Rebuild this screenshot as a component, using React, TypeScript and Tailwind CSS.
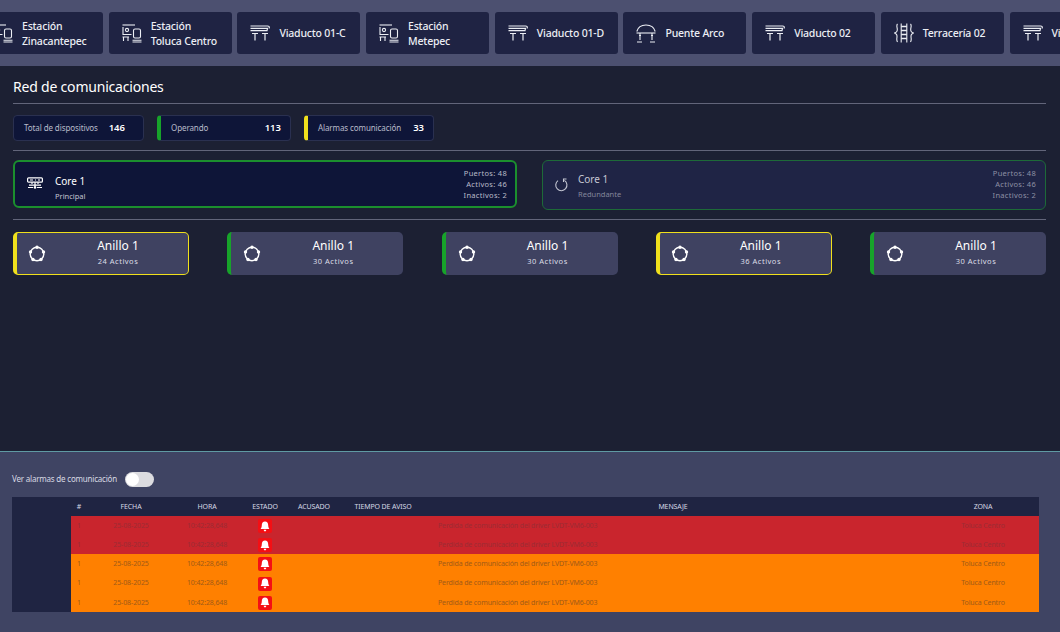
const stationCards = [
  { kind: 'station', lines: ['Estación', 'Zinacantepec'] },
  { kind: 'station', lines: ['Estación', 'Toluca Centro'] },
  { kind: 'viaduct', lines: ['Viaducto 01-C'] },
  { kind: 'station', lines: ['Estación', 'Metepec'] },
  { kind: 'viaduct', lines: ['Viaducto 01-D'] },
  { kind: 'arch', lines: ['Puente Arco'] },
  { kind: 'viaduct', lines: ['Viaducto 02'] },
  { kind: 'track', lines: ['Terracería 02'] },
  { kind: 'viaduct', lines: ['Viaducto 03'] },
]

const rings = [
  { active: 24, alert: true },
  { active: 30, alert: false },
  { active: 30, alert: false },
  { active: 36, alert: true },
  { active: 30, alert: false },
]

const rows = ['red', 'red', 'orange', 'orange', 'orange']

function StationIcon() {
  return (
    <svg width="20" height="19" viewBox="0 0 20 19" fill="none" stroke="currentColor" strokeWidth="1.1">
      <path d="M0.5 1H13" />
      <path d="M1 3V10.5H9.5" />
      <circle cx="5" cy="6" r="1.6" />
      <rect x="11.5" y="5" width="7" height="9" rx="1.5" />
      <path d="M0.5 13H7M1.5 13V17M6 13V17" />
      <path d="M10.5 16.2H19.5M10.5 18H19.5" />
    </svg>
  )
}

function ViaductIcon() {
  return (
    <svg width="20" height="16" viewBox="0 0 20 16" fill="none" stroke="currentColor" strokeWidth="1.2">
      <path d="M0.5 1H17.5C19 1 19.5 1.5 19.2 3.5" />
      <path d="M0.5 3.4H17.5L17 5.6H0.5" />
      <path d="M2 8.5H8M5 8.5V15.5M12 8.5H18M15 8.5V15.5" />
    </svg>
  )
}

function ArchIcon() {
  return (
    <svg width="20" height="19" viewBox="0 0 20 19" fill="none" stroke="currentColor" strokeWidth="1.1">
      <path d="M0.8 7.5C2 3 5.5 1 10 1C14.5 1 18 3 19.2 7.5" />
      <path d="M0.5 9H19.5" />
      <path d="M4 9V16M16 9V16M3 11.5H5M15 11.5H17" />
      <path d="M1 18H6M14 18H19" />
    </svg>
  )
}

function TrackIcon() {
  return (
    <svg width="20" height="20" viewBox="0 0 20 20" fill="none" stroke="currentColor" strokeWidth="1.1">
      <path d="M3.5 1C1.5 3 4.5 6 2.8 8.5C2.2 9.4 1.2 9.8 0.6 10C1.2 10.4 2.4 10.8 2.8 12C3.6 14.5 1.8 16.5 3.5 19" />
      <path d="M16.5 1C18.5 3 15.5 6 17.2 8.5C17.8 9.4 18.8 9.8 19.4 10C18.8 10.4 17.6 10.8 17.2 12C16.4 14.5 18.2 16.5 16.5 19" />
      <path d="M7.2 0.5V19.5M12.8 0.5V19.5" />
      <path d="M7.2 3.5H12.8M7.2 7.5H12.8M7.2 11.5H12.8M7.2 15.5H12.8" strokeWidth="1.6" />
    </svg>
  )
}

function CardIcon({ kind }: { kind: string }) {
  if (kind === 'station') return <StationIcon />
  if (kind === 'viaduct') return <ViaductIcon />
  if (kind === 'arch') return <ArchIcon />
  return <TrackIcon />
}

function RingIcon() {
  return (
    <svg width="18" height="18" viewBox="0 0 18 18" fill="none" stroke="white" strokeWidth="1.4">
      <circle cx="9" cy="9" r="6.8" />
      <circle cx="9" cy="2.2" r="1.7" fill="white" stroke="none" />
      <circle cx="15.5" cy="6.9" r="1.7" fill="white" stroke="none" />
      <circle cx="13" cy="14.5" r="1.7" fill="white" stroke="none" />
      <circle cx="5" cy="14.5" r="1.7" fill="white" stroke="none" />
      <circle cx="2.5" cy="6.9" r="1.7" fill="white" stroke="none" />
    </svg>
  )
}

function SwitchIcon() {
  return (
    <svg width="16" height="14" viewBox="0 0 16 14" fill="none" stroke="white" strokeWidth="1.2">
      <rect x="0.6" y="0.8" width="14.8" height="4.4" rx="1" />
      <path d="M3 3H6M8 3H9M11 3H13" />
      <path d="M5 5.2V7M11 5.2V7" />
      <path d="M8 5.2V11" />
      <circle cx="8" cy="10.5" r="1.3" fill="white" stroke="none" />
      <path d="M2 8.2H14M1 10.5H6M10 10.5H15" />
    </svg>
  )
}

function RefreshIcon() {
  return (
    <svg width="14" height="14" viewBox="0 0 14 14" fill="none" stroke="#c5c7d3" strokeWidth="1.1">
      <path d="M4 2.6A5.6 5.6 0 1 0 10.4 2.4" />
      <path d="M12.5 1H9.5V4" />
    </svg>
  )
}

function Bell() {
  return (
    <div className="flex h-[14px] w-[14px] items-center justify-center rounded-[2px] bg-[#f40f14]">
      <svg width="10" height="11" viewBox="0 0 10 11" fill="white">
        <path d="M5 0.6C2.9 0.6 1.8 2.2 1.8 4.2C1.8 6.2 1.2 7.2 0.5 8H9.5C8.8 7.2 8.2 6.2 8.2 4.2C8.2 2.2 7.1 0.6 5 0.6Z" />
        <path d="M3.7 8.8C3.9 9.8 4.4 10.4 5 10.4C5.6 10.4 6.1 9.8 6.3 8.8Z" />
      </svg>
    </div>
  )
}

export default function App() {
  return (
    <div className="flex h-[632px] w-[1060px] flex-col overflow-hidden bg-[#1c2033] font-['Noto_Sans',sans-serif] text-white">
      {/* TOP BAR */}
      <div className="h-[66px] shrink-0 overflow-hidden bg-[#4c5070] pt-3">
        <div className="-ml-5 flex w-[1200px] gap-[5.7px]">
          {stationCards.map((c, i) => (
            <div
              key={i}
              className="flex h-[42px] w-[123px] shrink-0 items-center gap-[9px] rounded-[3px] bg-[#1f2343] pl-[13px] text-[#eceef4]"
            >
              <div className="flex w-[20px] shrink-0 justify-center">
                <CardIcon kind={c.kind} />
              </div>
              <div className="pt-[1px] text-[10.5px] leading-[15px] font-medium tracking-[-0.2px] whitespace-nowrap">
                {c.lines.map(l => (
                  <div key={l}>{l}</div>
                ))}
              </div>
            </div>
          ))}
        </div>
      </div>

      {/* RED DE COMUNICACIONES */}
      <div className="h-[385px] shrink-0 px-[13px] pt-[10px] pr-[14px]">
        <h1 className="h-[28px] border-b border-[#62657a] text-[14px] leading-[21px] font-normal tracking-[-0.2px]">
          Red de comunicaciones
        </h1>

        <div className="mt-[11px] flex gap-[13px] border-b border-[#62657a] pb-[9px]">
          <div className="flex h-[26px] w-[131px] items-center justify-between rounded-[4px] border border-[#2a3050] bg-[#0e1538] pr-[18px] pl-[10px]">
            <span className="text-[8px] tracking-[-0.1px] text-[#b9bcca]">Total de dispositivos</span>
            <span className="text-[9.5px] font-semibold">146</span>
          </div>
          <div className="flex h-[26px] w-[134px] items-center justify-between rounded-[4px] border border-l-[4px] border-[#2a3050] border-l-[#17a32a] bg-[#0e1538] pr-[9px] pl-[10px]">
            <span className="text-[8px] tracking-[-0.1px] text-[#b9bcca]">Operando</span>
            <span className="text-[9.5px] font-semibold">113</span>
          </div>
          <div className="flex h-[26px] w-[130px] items-center justify-between rounded-[4px] border border-l-[4px] border-[#2a3050] border-l-[#f0e01c] bg-[#0e1538] pr-[9px] pl-[10px]">
            <span className="text-[8px] tracking-[-0.1px] text-[#b9bcca]">Alarmas comunicación</span>
            <span className="text-[9.5px] font-semibold">33</span>
          </div>
        </div>

        <div className="flex justify-between border-b border-[#62657a] pt-[9px] pb-[9px]">
          <div className="flex h-[48px] w-[504px] items-center rounded-[6px] border-2 border-[#1b8f2e] bg-[#0e1538] pr-[8px] pl-[11px]">
            <div className="flex w-[18px] justify-center">
              <SwitchIcon />
            </div>
            <div className="mt-[8px] ml-[11px]">
              <div className="text-[10px] leading-[14px] font-normal">Core 1</div>
              <div className="mt-[3px] text-[7.5px] leading-[11px] text-[#c3c5d1]">Principal</div>
            </div>
            <div className="ml-auto text-right text-[7.5px] leading-[11px] tracking-[0.3px] text-[#b9bbc9]">
              <div>Puertos: 48</div>
              <div>Activos: 46</div>
              <div>Inactivos: 2</div>
            </div>
          </div>
          <div className="flex h-[50px] w-[504px] items-center rounded-[6px] border border-[#1d6a38] bg-[#1f2445] pr-[9px] pl-[11px]">
            <div className="flex w-[14px] justify-center">
              <RefreshIcon />
            </div>
            <div className="ml-[10px] pt-[2px]">
              <div className="text-[10px] leading-[14px] text-[#c5c7d3]">Core 1</div>
              <div className="mt-[3px] text-[7.5px] leading-[11px] text-[#83869b]">Redundante</div>
            </div>
            <div className="ml-auto pb-[2px] text-right text-[7.5px] leading-[11px] tracking-[0.3px] text-[#8d90a4]">
              <div>Puertos: 48</div>
              <div>Activos: 46</div>
              <div>Inactivos: 2</div>
            </div>
          </div>
        </div>

        <div className="mt-[12px] flex justify-between">
          {rings.map((r, i) => (
            <div
              key={i}
              className={
                r.alert
                  ? 'flex h-[43px] w-[176px] items-center rounded-[5px] border border-l-[4px] border-[#f0e01c] bg-[#3f4261] pl-[11px]'
                  : 'flex h-[43px] w-[176px] items-center rounded-[5px] border-l-[4px] border-[#17a32a] bg-[#3f4261] pl-[12px]'
              }
            >
              <RingIcon />
              <div className="ml-[37px] w-[70px] pb-[2px] text-center">
                <div className="text-[12px] leading-[16px] font-normal">Anillo 1</div>
                <div className="mt-[2px] text-[7.5px] leading-[11px] tracking-[0.5px] text-[#dcdde6]">
                  {r.active} Activos
                </div>
              </div>
            </div>
          ))}
        </div>
      </div>

      {/* ALARMAS */}
      <div className="flex-1 border-t border-[#5f9aa3] bg-[#3f4463] pt-[19px]">
        <div className="flex h-[16px] items-center pl-[12px]">
          <span className="text-[8px] tracking-[-0.2px] text-[#d8dae4]">Ver alarmas de comunicación</span>
          <div className="ml-[8px] flex h-[15px] w-[29px] items-center rounded-full bg-[#dcdce0] pl-[1px]">
            <div className="h-[13px] w-[13px] rounded-full bg-white" />
          </div>
        </div>

        <div className="mt-[10px] ml-[12px] flex w-[1027px] bg-[#1f2442]">
          <div className="w-[59px] shrink-0" />
          <table className="w-[968px] table-fixed border-collapse text-center text-[7px] tracking-[-0.12px]">
            <colgroup>
              <col className="w-[16px]" />
              <col className="w-[88px]" />
              <col className="w-[64px]" />
              <col className="w-[52px]" />
              <col className="w-[46px]" />
              <col className="w-[92px]" />
              <col className="w-[488px]" />
              <col className="w-[122px]" />
            </colgroup>
            <thead>
              <tr className="h-[19px] text-[#d5d7e2] [&>th]:pt-[1px]">
                <th className="font-normal">#</th>
                <th className="font-normal">FECHA</th>
                <th className="font-normal">HORA</th>
                <th className="font-normal">ESTADO</th>
                <th className="font-normal">ACUSADO</th>
                <th className="font-normal">TIEMPO DE AVISO</th>
                <th className="font-normal">MENSAJE</th>
                <th className="pl-[10px] font-normal">ZONA</th>
              </tr>
            </thead>
            <tbody>
              {rows.map((color, i) => (
                <tr
                  key={i}
                  className={
                    color === 'red'
                      ? 'h-[19.2px] bg-[#c9252d] text-[#9c2c34] [&>td]:pt-[1px]'
                      : 'h-[19.2px] bg-[#ff8000] text-[#a05a18] [&>td]:pt-[1px]'
                  }
                >
                  <td>1</td>
                  <td>25-08-2025</td>
                  <td>10:42:28,648</td>
                  <td>
                    <div className="flex justify-center">
                      <Bell />
                    </div>
                  </td>
                  <td></td>
                  <td></td>
                  <td className="pl-[9px] text-left">Perdida de comunicación del driver LVDT-VM6-003</td>
                  <td className="pl-[10px] text-center">Toluca Centro</td>
                </tr>
              ))}
            </tbody>
          </table>
        </div>
      </div>
    </div>
  )
}
